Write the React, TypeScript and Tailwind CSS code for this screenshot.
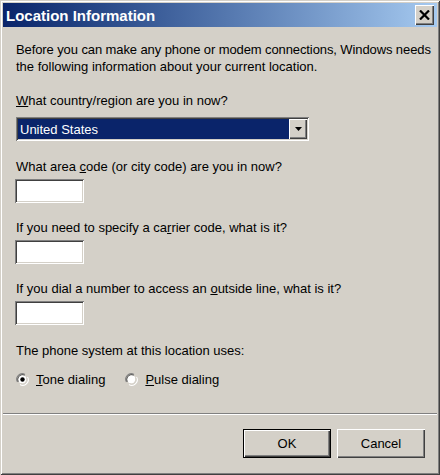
import React from "react";

const font = { fontFamily: '"Liberation Sans", Arial, sans-serif' };

function Field() {
  return (
    <div className="w-[69px] h-[24px] bg-white shadow-[inset_1px_1px_#808080,inset_-1px_-1px_#ffffff,inset_2px_2px_#404040,inset_-2px_-2px_#d4d0c8]" />
  );
}

function Radio({ checked }: { checked?: boolean }) {
  return (
    <svg width="13" height="13" viewBox="0 0 13 13" className="shrink-0">
      <path d="M1.5 9 A5.5 5.5 0 0 1 9 1.5" stroke="#808080" strokeWidth="1.2" fill="none" />
      <path d="M2.5 8.5 A4.5 4.5 0 0 1 8.5 2.5" stroke="#404040" strokeWidth="1.2" fill="none" />
      <circle cx="6.5" cy="6.5" r="4.2" fill="#fff" />
      <path d="M4 11.5 A5.5 5.5 0 0 0 11.5 4" stroke="#fff" strokeWidth="1.2" fill="none" />
      <path d="M4.5 10.5 A4.5 4.5 0 0 0 10.5 4.5" stroke="#d4d0c8" strokeWidth="1.2" fill="none" />
      {checked && <circle cx="6.5" cy="6.5" r="2.2" fill="#000" />}
    </svg>
  );
}

function Button({ label, primary }: { label: string; primary?: boolean }) {
  return (
    <button
      className={
        primary
          ? "w-[88px] h-[29px] bg-[#d4d0c8] text-[13px] text-black border border-black shadow-[inset_1px_1px_#ffffff,inset_-1px_-1px_#404040,inset_-2px_-2px_#808080]"
          : "w-[88px] h-[29px] bg-[#d4d0c8] text-[13px] text-black shadow-[inset_1px_1px_#ffffff,inset_-1px_-1px_#404040,inset_-2px_-2px_#808080]"
      }
    >
      {label}
    </button>
  );
}

export default function App() {
  return (
    <div
      style={font}
      className="w-[440px] h-[475px] bg-[#d4d0c8] p-[3px] flex flex-col text-[13px] leading-[17px] text-black shadow-[inset_1px_1px_#d4d0c8,inset_-1px_-1px_#404040,inset_2px_2px_#ffffff,inset_-2px_-2px_#808080]"
    >
      {/* Title bar */}
      <div className="h-[24px] flex items-center justify-between pl-[3px] pr-[3px] bg-gradient-to-r from-[#0a246a] to-[#a6caf0]">
        <span className="text-white font-bold text-[15px]">Location Information</span>
        <div className="w-[19px] h-[20px] bg-[#d4d0c8] flex items-center justify-center shadow-[inset_1px_1px_#ffffff,inset_-1px_-1px_#404040,inset_-2px_-2px_#808080]">
          <svg width="11" height="10" viewBox="0 0 11 10">
            <path d="M1 0.5 L10 9.5 M10 0.5 L1 9.5" stroke="#000" strokeWidth="2.2" />
          </svg>
        </div>
      </div>

      <div className="pl-[13px] pr-[2px] pt-[14px] flex flex-col">
        <p className="whitespace-nowrap">
          <span className="tracking-[-0.1px]">
            Before you can make any phone or modem connections, Windows needs
          </span>
          <br />
          the following information about your current location.
        </p>

        <p className="mt-[17px]">
          <u>W</u>hat country/region are you in now?
        </p>
        <div className="mt-[8px] w-[293px] h-[24px] flex p-[2px] bg-white shadow-[inset_1px_1px_#808080,inset_-1px_-1px_#ffffff,inset_2px_2px_#404040,inset_-2px_-2px_#d4d0c8]">
          <div className="flex-1 bg-[#0a246a] text-white flex items-center pl-[2px]">United States</div>
          <div className="w-[18px] bg-[#d4d0c8] flex items-center justify-center shadow-[inset_1px_1px_#ffffff,inset_-1px_-1px_#404040,inset_-2px_-2px_#808080]">
            <svg width="7" height="4" viewBox="0 0 7 4">
              <path d="M0 0 H7 L3.5 4 Z" fill="#000" />
            </svg>
          </div>
        </div>

        <p className="mt-[17px]">
          What area <u>c</u>ode (or city code) are you in now?
        </p>
        <div className="mt-[4px] -ml-[1px]">
          <Field />
        </div>

        <p className="mt-[16px]">
          If you need to specify a ca<u>r</u>rier code, what is it?
        </p>
        <div className="mt-[4px] -ml-[1px]">
          <Field />
        </div>

        <p className="mt-[16px]">
          If you dial a number to access an <u>o</u>utside line, what is it?
        </p>
        <div className="mt-[4px] -ml-[1px]">
          <Field />
        </div>

        <p className="mt-[17px]">The phone system at this location uses:</p>
        <div className="mt-[12px] flex items-center">
          <Radio checked />
          <span className="ml-[7px]">
            <u>T</u>one dialing
          </span>
          <span className="ml-[20px] flex">
            <Radio />
          </span>
          <span className="ml-[7px]">
            <u>P</u>ulse dialing
          </span>
        </div>
      </div>

      <div className="mt-auto h-[2px] border-t border-[#808080] border-b border-b-white" />
      <div className="flex justify-end gap-[6px] pr-[12px] pt-[14px] pb-[14px]">
        <Button label="OK" primary />
        <Button label="Cancel" />
      </div>
    </div>
  );
}
